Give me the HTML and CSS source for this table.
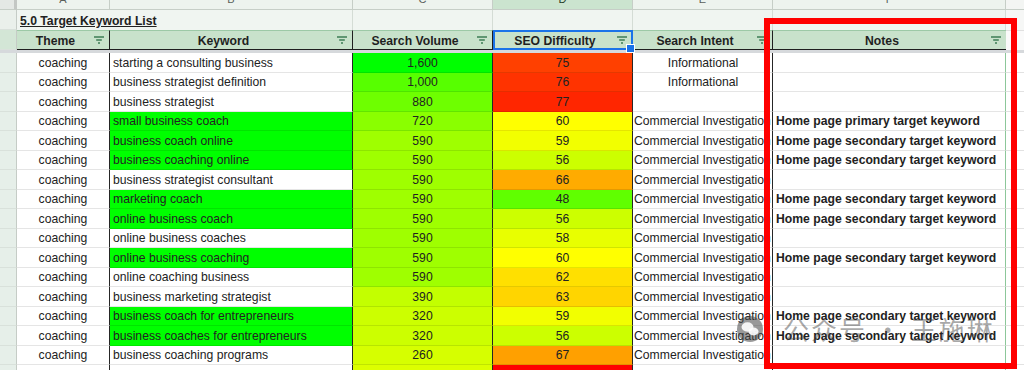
FILE: index.html
```html
<!DOCTYPE html>
<html lang="en">
<head>
<meta charset="utf-8">
<title>5.0 Target Keyword List</title>
<link rel="stylesheet" href="styles.css">
</head>
<body>
<div class="sheet">
  <!-- column letters -->
  <div class="L corner"></div>
  <div class="L"><span>A</span></div>
  <div class="L"><span>B</span></div>
  <div class="L"><span>C</span></div>
  <div class="L lsel"><span>D</span></div>
  <div class="L"><span>E</span></div>
  <div class="L"><span>F</span></div>
  <div class="L lg"></div>

  <!-- title row -->
  <div class="rn rn-t"></div>
  <div class="t title"><span>5.0 Target Keyword List</span></div>
  <div class="t"></div>
  <div class="t"></div>
  <div class="t"></div>
  <div class="t"></div>
  <div class="t tg"></div>

  <!-- header row -->
  <div class="rn rn-h"></div>
  <div class="h"><span class="lbl">Theme</span><svg class="f" viewBox="0 0 10 8" width="10" height="8"><path d="M0 1h10M2.2 4h5.6M4 7h2"/></svg></div>
  <div class="h"><span class="lbl">Keyword</span><svg class="f" viewBox="0 0 10 8" width="10" height="8"><path d="M0 1h10M2.2 4h5.6M4 7h2"/></svg></div>
  <div class="h"><span class="lbl">Search Volume</span><svg class="f" viewBox="0 0 10 8" width="10" height="8"><path d="M0 1h10M2.2 4h5.6M4 7h2"/></svg></div>
  <div class="h sel"><span class="lbl">SEO Difficulty</span><svg class="f" viewBox="0 0 10 8" width="10" height="8"><path d="M0 1h10M2.2 4h5.6M4 7h2"/></svg></div>
  <div class="h"><span class="lbl">Search Intent</span><svg class="f" viewBox="0 0 10 8" width="10" height="8"><path d="M0 1h10M2.2 4h5.6M4 7h2"/></svg></div>
  <div class="h hn"><span class="lbl">Notes</span><svg class="f" viewBox="0 0 10 8" width="10" height="8"><path d="M0 1h10M2.2 4h5.6M4 7h2"/></svg></div>
  <div class="hg"></div>

  <div class="freeze"></div>

  <!-- data rows -->
  <div class="rn"></div><div class="c th">coaching</div><div class="c kw">starting a consulting business</div><div class="c num" style="background:#00ff00">1,600</div><div class="c num" style="background:#ff4000">75</div><div class="c it ctr">Informational</div><div class="c nt"></div><div class="c g"></div>
  <div class="rn"></div><div class="c th">coaching</div><div class="c kw">business strategist definition</div><div class="c num" style="background:#57ff00">1,000</div><div class="c num" style="background:#ff3300">76</div><div class="c it ctr">Informational</div><div class="c nt"></div><div class="c g"></div>
  <div class="rn"></div><div class="c th">coaching</div><div class="c kw">business strategist</div><div class="c num" style="background:#6eff00">880</div><div class="c num" style="background:#ff2600">77</div><div class="c it"></div><div class="c nt"></div><div class="c g"></div>
  <div class="rn"></div><div class="c th">coaching</div><div class="c kw hl">small business coach</div><div class="c num" style="background:#8aff00">720</div><div class="c num" style="background:#ffff00">60</div><div class="c it">Commercial Investigation</div><div class="c nt">Home page primary target keyword</div><div class="c g"></div>
  <div class="rn"></div><div class="c th">coaching</div><div class="c kw hl">business coach online</div><div class="c num" style="background:#9fff00">590</div><div class="c num" style="background:#f2ff00">59</div><div class="c it">Commercial Investigation</div><div class="c nt">Home page secondary target keyword</div><div class="c g"></div>
  <div class="rn"></div><div class="c th">coaching</div><div class="c kw hl">business coaching online</div><div class="c num" style="background:#9fff00">590</div><div class="c num" style="background:#ccff00">56</div><div class="c it">Commercial Investigation</div><div class="c nt">Home page secondary target keyword</div><div class="c g"></div>
  <div class="rn"></div><div class="c th">coaching</div><div class="c kw">business strategist consultant</div><div class="c num" style="background:#9fff00">590</div><div class="c num" style="background:#ffab00">66</div><div class="c it">Commercial Investigation</div><div class="c nt"></div><div class="c g"></div>
  <div class="rn"></div><div class="c th">coaching</div><div class="c kw hl">marketing coach</div><div class="c num" style="background:#9fff00">590</div><div class="c num" style="background:#60ff00">48</div><div class="c it">Commercial Investigation</div><div class="c nt">Home page secondary target keyword</div><div class="c g"></div>
  <div class="rn"></div><div class="c th">coaching</div><div class="c kw hl">online business coach</div><div class="c num" style="background:#9fff00">590</div><div class="c num" style="background:#ccff00">56</div><div class="c it">Commercial Investigation</div><div class="c nt">Home page secondary target keyword</div><div class="c g"></div>
  <div class="rn"></div><div class="c th">coaching</div><div class="c kw">online business coaches</div><div class="c num" style="background:#9fff00">590</div><div class="c num" style="background:#e8ff00">58</div><div class="c it">Commercial Investigation</div><div class="c nt"></div><div class="c g"></div>
  <div class="rn"></div><div class="c th">coaching</div><div class="c kw hl">online business coaching</div><div class="c num" style="background:#9fff00">590</div><div class="c num" style="background:#ffff00">60</div><div class="c it">Commercial Investigation</div><div class="c nt">Home page secondary target keyword</div><div class="c g"></div>
  <div class="rn"></div><div class="c th">coaching</div><div class="c kw">online coaching business</div><div class="c num" style="background:#9fff00">590</div><div class="c num" style="background:#ffe000">62</div><div class="c it">Commercial Investigation</div><div class="c nt"></div><div class="c g"></div>
  <div class="rn"></div><div class="c th">coaching</div><div class="c kw">business marketing strategist</div><div class="c num" style="background:#c3ff00">390</div><div class="c num" style="background:#ffd500">63</div><div class="c it">Commercial Investigation</div><div class="c nt"></div><div class="c g"></div>
  <div class="rn"></div><div class="c th">coaching</div><div class="c kw hl">business coach for entrepreneurs</div><div class="c num" style="background:#ccff00">320</div><div class="c num" style="background:#f2ff00">59</div><div class="c it">Commercial Investigation</div><div class="c nt">Home page secondary target keyword</div><div class="c g"></div>
  <div class="rn"></div><div class="c th">coaching</div><div class="c kw hl">business coaches for entrepreneurs</div><div class="c num" style="background:#ccff00">320</div><div class="c num" style="background:#ccff00">56</div><div class="c it">Commercial Investigation</div><div class="c nt">Home page secondary target keyword</div><div class="c g"></div>
  <div class="rn"></div><div class="c th">coaching</div><div class="c kw">business coaching programs</div><div class="c num" style="background:#d6ff00">260</div><div class="c num" style="background:#ffa000">67</div><div class="c it">Commercial Investigation</div><div class="c nt"></div><div class="c g"></div>
  <div class="rn"></div><div class="c th">coaching</div><div class="c kw">business consultant vs business coach</div><div class="c num" style="background:#dcff00">210</div><div class="c num" style="background:#ff0000">81</div><div class="c it ctr">Informational</div><div class="c nt"></div><div class="c g"></div>
</div>

<div class="annot"></div>

<div class="wm">
  <svg class="wm-ico" viewBox="0 0 26 26" width="26" height="26">
    <circle cx="13" cy="13" r="13" fill="rgba(70,70,70,0.55)"/>
    <ellipse cx="10.5" cy="11" rx="6" ry="4.7" fill="#fff" fill-opacity="0.9"/>
    <ellipse cx="16.5" cy="15.5" rx="5" ry="3.9" fill="#fff" fill-opacity="0.9"/>
  </svg>
  <span class="wm-txt">公众号 · 王施琳</span>
</div>
</body>
</html>
```

FILE: styles.css
```css
* {
  box-sizing: border-box;
}

html, body {
  margin: 0;
  padding: 0;
}

body {
  width: 1024px;
  height: 370px;
  overflow: hidden;
  position: relative;
  background: #ffffff;
  font-family: "Liberation Sans", Arial, sans-serif;
  font-size: 12.2px;
  color: #222222;
}

.sheet {
  display: grid;
  grid-template-columns: 17px 93px 243px 140px 140px 140px 233px 18px;
  grid-template-rows: 10px 20px 20px 3px repeat(17, 19.5px);
}

/* column letter row */
.L {
  display: flex;
  justify-content: center;
  align-items: flex-end;
  overflow: hidden;
  background: #edf3ee;
  border-right: 1px solid #c6cec7;
  border-bottom: 1px solid #c6cec7;
  font-size: 11px;
  color: #5a5f5b;
}

.L span {
  line-height: 14px;
  margin-bottom: 3px;
}

.L.corner {
  background: #e4e8e5;
  border-right: 3px solid #c3c7c4;
}

.L.lsel {
  background: #cbe4cf;
  color: #1f3a26;
}

.L.lg {
  background: #f3f5f3;
  border-right: none;
}

/* row-number column */
.rn {
  background: #e6efe9;
  border-right: 1px solid #c5ccc6;
  border-bottom: 1px solid #d9e1db;
}

.rn-t {
  background: #eaf0eb;
}

.rn-h {
  background: #d3e6d6;
}

/* title row */
.t {
  background: #f0f5f1;
  border-right: 1px solid #d4dcd5;
}

.t.title {
  grid-column: span 2;
  display: flex;
  align-items: center;
  padding-left: 3px;
  padding-top: 2px;
  font-weight: bold;
  white-space: nowrap;
}

.t.title span {
  text-decoration: underline;
}

.t.tg {
  background: #f6f7f6;
  border-right: none;
}

/* header row */
.h {
  display: flex;
  align-items: center;
  background: #c8e2cb;
  border-top: 1px solid #9cc9a6;
  border-right: 1px solid #1f1f1f;
  border-bottom: 1px solid #1f1f1f;
  font-weight: bold;
  color: #1f1f1f;
  white-space: nowrap;
}

.h .lbl {
  flex: 1;
  text-align: center;
  padding-left: 5px;
  padding-top: 1px;
}

.h .f {
  flex: none;
  margin: 0 5px;
}

.h .f path {
  stroke: #3c7d56;
  stroke-width: 1.3;
  fill: none;
}

.h.hn {
  border-right: none;
}

.hg {
  background: #fafafa;
  border-top: 1px solid #e0e0e0;
}

.h.sel {
  position: relative;
  outline: 2px solid #1a73e8;
  outline-offset: -2px;
}

.h.sel::after {
  content: "";
  position: absolute;
  right: -3px;
  bottom: -4px;
  width: 7px;
  height: 7px;
  background: #1a73e8;
  border: 1px solid #ffffff;
  z-index: 3;
}

/* frozen divider */
.freeze {
  grid-column: 1 / -1;
  background: #d6d9dc;
}

/* data cells */
.c {
  display: flex;
  align-items: center;
  overflow: hidden;
  white-space: nowrap;
  padding-top: 1px;
  border-right: 1px solid #262626;
  border-bottom: 1px solid rgba(0, 0, 0, 0.1);
}

.c.th,
.c.num {
  justify-content: center;
}

.c.kw {
  padding-left: 3px;
}

.c.hl {
  background: #00ff00;
}

.c.it {
  padding-left: 1px;
}

.c.it.ctr {
  justify-content: center;
}

.c.nt {
  padding-left: 3px;
  font-weight: bold;
  border-right: 1px solid #8cc79a;
}

.c.g {
  border-right: none;
  border-bottom: 1px solid #e2e2e2;
}

/* annotation box */
.annot {
  position: absolute;
  left: 764px;
  top: 18px;
  width: 253px;
  height: 351px;
  border: 6px solid #ff0000;
  z-index: 6;
}

/* watermark */
.wm {
  position: absolute;
  left: 737px;
  top: 313px;
  display: flex;
  align-items: center;
  gap: 20px;
  z-index: 5;
  pointer-events: none;
}

.wm-ico {
  display: block;
}

.wm-txt {
  font-family: "Noto Sans CJK SC", sans-serif;
  font-size: 26px;
  line-height: 32px;
  letter-spacing: 2px;
  color: rgba(60, 60, 60, 0.45);
  white-space: nowrap;
}
```
